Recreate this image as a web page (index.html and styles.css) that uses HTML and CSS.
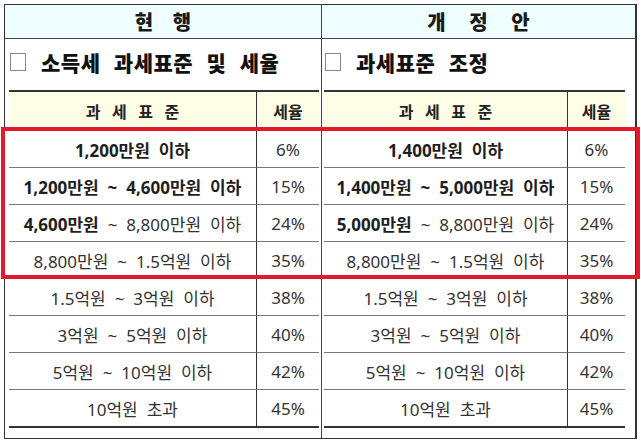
FILE: index.html
```html
<!DOCTYPE html>
<html lang="ko">
<head>
<meta charset="utf-8">
<link rel="stylesheet" href="styles.css">
</head>
<body>
<div class="sheet">
  <section class="col col-left">
    <div class="head">현 행</div>
    <div class="title"><span class="box"></span>소득세 과세표준 및 세율</div>
    <div class="rates rates-left">
      <div class="th">과 세 표 준</div><div class="th">세율</div>
      <div class="b">1,200만원 이하</div><div>6%</div>
      <div class="b">1,200만원 ~ 4,600만원 이하</div><div>15%</div>
      <div><b>4,600만원</b>&nbsp;~ 8,800만원 이하</div><div>24%</div>
      <div>8,800만원 ~ 1.5억원 이하</div><div>35%</div>
      <div>1.5억원 ~ 3억원 이하</div><div>38%</div>
      <div>3억원 ~ 5억원 이하</div><div>40%</div>
      <div>5억원 ~ 10억원 이하</div><div>42%</div>
      <div class="last">10억원 초과</div><div class="last">45%</div>
    </div>
  </section>
  <section class="col col-right">
    <div class="head head-wide">개 정 안</div>
    <div class="title"><span class="box"></span>과세표준 조정</div>
    <div class="rates rates-right">
      <div class="th">과 세 표 준</div><div class="th">세율</div>
      <div class="b">1,400만원 이하</div><div>6%</div>
      <div class="b">1,400만원 ~ 5,000만원 이하</div><div>15%</div>
      <div><b>5,000만원</b>&nbsp;~ 8,800만원 이하</div><div>24%</div>
      <div>8,800만원 ~ 1.5억원 이하</div><div>35%</div>
      <div>1.5억원 ~ 3억원 이하</div><div>38%</div>
      <div>3억원 ~ 5억원 이하</div><div>40%</div>
      <div>5억원 ~ 10억원 이하</div><div>42%</div>
      <div class="last">10억원 초과</div><div class="last">45%</div>
    </div>
  </section>
</div>
<div class="highlight"></div>
</body>
</html>
```
FILE: styles.css
```css
html, body {
  margin: 0;
  padding: 0;
  background: #fff;
}
body {
  font-family: "Noto Sans", "Noto Sans CJK KR", sans-serif;
  color: #333;
  position: relative;
  width: 641px;
  height: 441px;
  overflow: hidden;
}
.sheet {
  margin: 4px 0 0 4px;
  width: 630px;
  height: 433px;
  border: 1px solid #333;
  border-right-width: 2px;
  display: grid;
  grid-template-columns: 317px 1fr;
}
.col {
  display: flex;
  flex-direction: column;
}
.col-left {
  border-right: 1px solid #444;
}
.head {
  height: 33px;
  border-bottom: 1px solid #444;
  background: #effeff;
  display: flex;
  align-items: center;
  justify-content: center;
  font-family: "Noto Sans CJK KR", sans-serif;
  font-weight: 900;
  font-size: 20px;
  color: #1a1a1a;
  word-spacing: 14px;
}
.head-wide {
  word-spacing: 18px;
}
.title {
  height: 44px;
  display: flex;
  align-items: center;
  font-family: "Noto Sans CJK KR", sans-serif;
  font-weight: 900;
  font-size: 21px;
  color: #111;
  letter-spacing: 0.5px;
  word-spacing: 7px;
  margin-bottom: 6px;
}
.col-left .title { padding-left: 5px; padding-top: 1px; }
.col-right .title { padding-left: 3px; padding-top: 1px; }
.box {
  display: inline-block;
  width: 14px;
  height: 16px;
  border: 1px solid #888;
  margin-right: 15px;
}
.rates {
  display: grid;
  border-top: 2px solid #333;
  border-bottom: 2px solid #333;
}
.rates-left {
  margin-left: 4px;
  width: 310px;
  grid-template-columns: 248px 1fr;
}
.rates-right {
  margin-left: 2px;
  width: 301px;
  grid-template-columns: 244px 1fr;
}
.rates > div {
  box-sizing: border-box;
  height: 37px;
  border-bottom: 1px solid #777;
  display: flex;
  align-items: center;
  justify-content: center;
  font-size: 17px;
  word-spacing: 4.5px;
  white-space: nowrap;
  color: #333;
}
.rates > div:nth-child(odd) {
  border-right: 1px solid #333;
}
.rates > .th {
  height: 39px;
  background: #fefee6;
  font-family: "Noto Sans CJK KR", sans-serif;
  font-weight: 700;
  font-size: 16px;
  color: #222;
  word-spacing: 7px;
}
.rates > .last {
  height: 36px;
  border-bottom: none;
}
.rates > .b, .rates b {
  font-weight: 700;
  color: #1e1e1e;
}
.highlight {
  position: absolute;
  left: 1px;
  top: 127px;
  width: 631px;
  height: 144px;
  border: 4px solid #e21a2c;
}
```
